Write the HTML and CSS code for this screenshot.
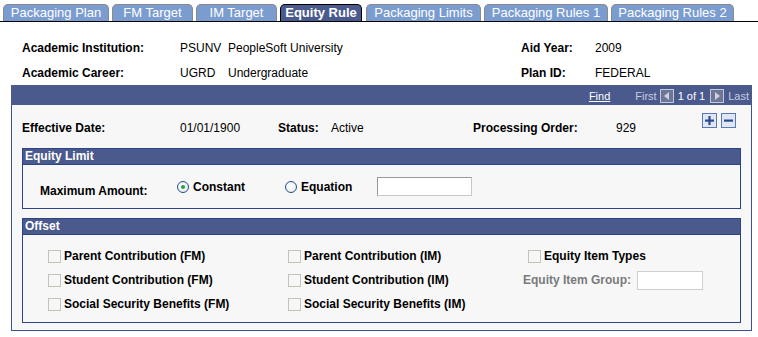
FILE: index.html
```html
<!DOCTYPE html>
<html lang="en">
<head>
    <meta charset="UTF-8">
    <title>Equity Rule</title>
    <link rel="stylesheet" href="styles.css">
</head>
<body>

    <!-- Page tabs -->
    <div class="tabs">
        <div class="tab t1">Packaging Plan</div>
        <div class="tab t2">FM Target</div>
        <div class="tab t3">IM Target</div>
        <div class="tab t4 active">Equity Rule</div>
        <div class="tab t5">Packaging Limits</div>
        <div class="tab t6">Packaging Rules 1</div>
        <div class="tab t7">Packaging Rules 2</div>
    </div>

    <!-- Key fields -->
    <div class="info">
        <div class="label">Academic Institution:</div>
        <div>PSUNV</div>
        <div>PeopleSoft University</div>
        <div class="label">Aid Year:</div>
        <div>2009</div>

        <div class="label">Academic Career:</div>
        <div>UGRD</div>
        <div>Undergraduate</div>
        <div class="label">Plan ID:</div>
        <div>FEDERAL</div>
    </div>

    <!-- Scroll area -->
    <div class="box">
        <div class="box-head">
            <a class="find" href="#">Find</a>
            <span class="dim">First</span>
            <svg class="nav" width="14" height="14" viewBox="0 0 14 14">
                <rect x="0.5" y="0.5" width="13" height="13" fill="#6e7697" stroke="#c4c8d4"/>
                <polygon points="9,3 9,11 4,7" fill="#d0d3dc"/>
            </svg>
            <span class="count">1 of 1</span>
            <svg class="nav" width="14" height="14" viewBox="0 0 14 14">
                <rect x="0.5" y="0.5" width="13" height="13" fill="#6e7697" stroke="#c4c8d4"/>
                <polygon points="5,3 5,11 10,7" fill="#d0d3dc"/>
            </svg>
            <span class="dim">Last</span>
        </div>

        <div class="box-body">
            <div class="eff-row">
                <div class="label">Effective Date:</div>
                <div>01/01/1900</div>
                <div class="label">Status:</div>
                <div>Active</div>
                <div class="label">Processing Order:</div>
                <div>929</div>
                <div class="row-btns">
                    <svg width="15" height="15" viewBox="0 0 15 15">
                        <rect x="0.5" y="0.5" width="14" height="14" fill="#dfe7f7" stroke="#5b77b4"/>
                        <rect x="3" y="6.5" width="9" height="2.2" fill="#2e4a8e"/>
                        <rect x="6.4" y="3" width="2.2" height="9" fill="#2e4a8e"/>
                    </svg>
                    <svg width="15" height="15" viewBox="0 0 15 15">
                        <rect x="0.5" y="0.5" width="14" height="14" fill="#dfe7f7" stroke="#5b77b4"/>
                        <rect x="3" y="6.5" width="9" height="2.2" fill="#2e4a8e"/>
                    </svg>
                </div>
            </div>

            <!-- Equity Limit -->
            <div class="group">
                <div class="group-head">Equity Limit</div>
                <div class="limit-row">
                    <div class="label max-label">Maximum Amount:</div>
                    <div class="radio-item constant">
                        <span class="radio checked"></span>
                        <span class="label">Constant</span>
                    </div>
                    <div class="radio-item equation">
                        <span class="radio"></span>
                        <span class="label">Equation</span>
                    </div>
                    <div class="field amount"></div>
                </div>
            </div>

            <!-- Offset -->
            <div class="group offset">
                <div class="group-head">Offset</div>
                <div class="offset-grid">
                    <div class="check-item"><span class="check"></span><span class="label">Parent Contribution (FM)</span></div>
                    <div class="check-item"><span class="check"></span><span class="label">Parent Contribution (IM)</span></div>
                    <div class="check-item"><span class="check"></span><span class="label">Equity Item Types</span></div>

                    <div class="check-item"><span class="check"></span><span class="label">Student Contribution (FM)</span></div>
                    <div class="check-item"><span class="check"></span><span class="label">Student Contribution (IM)</span></div>
                    <div class="item-group">
                        <span class="label grey">Equity Item Group:</span>
                        <span class="field group-field"></span>
                    </div>

                    <div class="check-item"><span class="check"></span><span class="label">Social Security Benefits (FM)</span></div>
                    <div class="check-item"><span class="check"></span><span class="label">Social Security Benefits (IM)</span></div>
                    <div></div>
                </div>
            </div>
        </div>
    </div>

</body>
</html>
```

FILE: styles.css
```css
* {
    margin: 0;
    padding: 0;
    box-sizing: border-box;
}

body {
    background-color: white;
    font-family: 'Liberation Sans', Arial, sans-serif;
    font-size: 12px;
    color: black;
    width: 758px;
    height: 337px;
    overflow: hidden;
}

.label {
    font-weight: bold;
}

/* Tabs */
.tabs {
    display: flex;
    align-items: flex-end;
    height: 22px;
    padding-left: 3px;
    border-bottom: 1px solid black;
}

.tab {
    height: 17px;
    margin-right: 3px;
    background-color: #7b9ccf;
    border: 1px solid #8a8a8a;
    border-bottom: none;
    border-radius: 5px 5px 0 0;
    color: white;
    font-size: 13px;
    line-height: 16px;
    text-align: center;
}

.t1 { width: 106px; }
.t2 { width: 81px; }
.t3 { width: 81px; }
.t4 { width: 82px; margin-right: 4px; }
.t5 { width: 115px; }
.t6 { width: 124px; }
.t7 { width: 123px; }

.tab.active {
    background-color: #4a5a8c;
    border-color: black;
    font-weight: bold;
}

/* Key fields */
.info {
    display: grid;
    grid-template-columns: 158px 48px 293px 74px auto;
    grid-auto-rows: 25px;
    align-items: center;
    padding: 13px 0 0 22px;
    height: 63px;
}

/* Scroll area */
.box {
    margin: 0 6px 0 11px;
    border: 1px solid #3e5291;
    border-top: none;
    background-color: #f7f7f7;
    height: 246px;
}

.box-head {
    display: flex;
    align-items: center;
    justify-content: flex-end;
    height: 20px;
    padding: 2px 3px 0 0;
    margin: 0 -1px;
    background-color: #4a5a8c;
    color: white;
    font-size: 11px;
}

.box-head .find {
    color: white;
    margin-right: 25px;
}

.box-head .dim {
    color: #c8cce0;
}

.box-head .nav {
    margin: 0 4px 0 3px;
}

.box-head .count {
    margin-right: 2px;
}

.box-body {
    padding: 0 10px;
}

.eff-row {
    display: grid;
    grid-template-columns: 158px 98px 53px 142px 143px 1fr auto;
    align-items: start;
    height: 43px;
    padding-top: 16px;
}

.row-btns {
    display: flex;
    gap: 4px;
    margin: -8px 5px 0 0;
}

.row-btns svg {
    display: block;
}

/* Groups */
.group {
    border: 1px solid #2c4386;
}

.group-head {
    height: 16px;
    padding-left: 2px;
    background-color: #4a5a8c;
    border-bottom: 1px solid #2c4386;
    color: white;
    font-weight: bold;
    line-height: 15px;
}

.limit-row {
    display: flex;
    align-items: center;
    height: 43px;
    padding-left: 17px;
}

.max-label {
    width: 137px;
    padding-top: 9px;
}

.radio-item {
    display: flex;
    align-items: center;
    gap: 4px;
}

.constant { width: 108px; }
.equation { width: 92px; }

.radio {
    width: 12px;
    height: 12px;
    border: 1px solid #1f4e8c;
    border-radius: 50%;
    background: radial-gradient(circle at 40% 40%, white, #e4e8ee);
    position: relative;
}

.radio.checked::after {
    content: '';
    position: absolute;
    width: 4px;
    height: 4px;
    left: 3px;
    top: 3px;
    border-radius: 50%;
    background-color: #27a33a;
}

.field {
    display: block;
    background-color: white;
    border: 1px solid #c8c8c8;
    border-top-color: #999;
    border-left-color: #999;
}

.amount {
    width: 95px;
    height: 19px;
}

.offset {
    margin-top: 9px;
}

.offset-grid {
    display: grid;
    grid-template-columns: 240px 240px auto;
    grid-auto-rows: 24px;
    align-items: center;
    padding: 9px 0 6px 25px;
}

.check-item {
    display: flex;
    align-items: center;
    gap: 3px;
}

.check {
    width: 13px;
    height: 13px;
    border: 1px solid #c7c3b4;
    background-color: #f7f7f7;
}

.item-group {
    display: flex;
    align-items: center;
    margin-left: -5px;
}

.grey {
    color: #7a7a7a;
    width: 114px;
}

.group-field {
    width: 66px;
    height: 19px;
    border-color: #cfcfcf;
}
```
